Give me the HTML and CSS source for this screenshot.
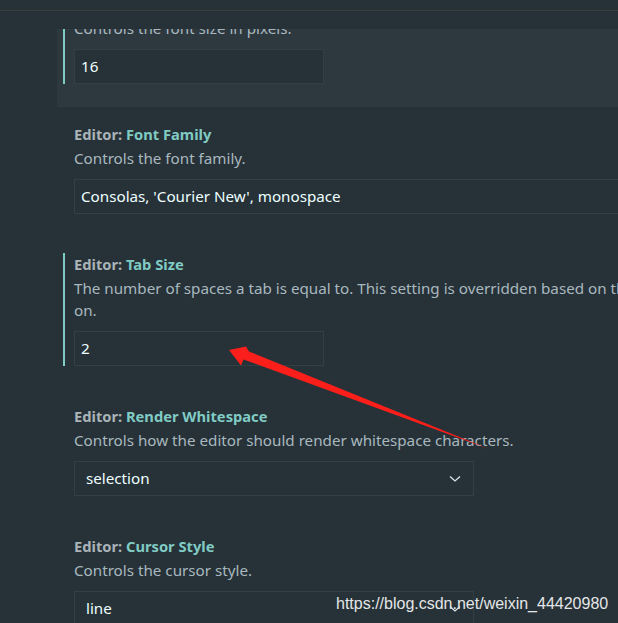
FILE: index.html
```html
<!DOCTYPE html>
<html>
<head>
<meta charset="utf-8">
<link rel="stylesheet" href="styles.css">
</head>
<body>
<div class="page">
  <div class="header"></div>
  <div class="list">
    <div class="scroll">
      <div class="item hovered focused">
        <div class="body">
          <div class="title"><span class="cat">Editor: </span><span class="name">Font Size</span></div>
          <div class="desc">Controls the font size in pixels.</div>
          <div class="field num">16</div>
        </div>
      </div>
      <div class="item">
        <div class="body">
          <div class="title"><span class="cat">Editor: </span><span class="name">Font Family</span></div>
          <div class="desc">Controls the font family.</div>
          <div class="field text">Consolas, 'Courier New', monospace</div>
        </div>
      </div>
      <div class="item focused">
        <div class="body">
          <div class="title"><span class="cat">Editor: </span><span class="name">Tab Size</span></div>
          <div class="desc">The number of spaces a tab is equal to. This setting is overridden based on the file contents when `Editor: Detect Indentation` is<br>on.</div>
          <div class="field num">2</div>
        </div>
      </div>
      <div class="item">
        <div class="body">
          <div class="title"><span class="cat">Editor: </span><span class="name">Render Whitespace</span></div>
          <div class="desc">Controls how the editor should render whitespace characters.</div>
          <div class="field select"><span>selection</span><svg class="chev" width="12" height="8" viewBox="0 0 12 8"><path d="M1 1.5 L6 6 L11 1.5" fill="none" stroke="#d8e6ea" stroke-width="1.3"/></svg></div>
        </div>
      </div>
      <div class="item">
        <div class="body">
          <div class="title"><span class="cat">Editor: </span><span class="name">Cursor Style</span></div>
          <div class="desc">Controls the cursor style.</div>
          <div class="field select"><span>line</span><svg class="chev" width="12" height="8" viewBox="0 0 12 8"><path d="M1 1.5 L6 6 L11 1.5" fill="none" stroke="#d8e6ea" stroke-width="1.3"/></svg></div>
        </div>
      </div>
    </div>
  </div>
  <svg class="arrow" width="618" height="623" viewBox="0 0 618 623">
    <polygon points="229,350 246,346.5 249,351.5 489,449 243.5,359.5 241,365.5" fill="#fa1f1a"/>
  </svg>
  <div class="watermark">https://blog.csdn.net/weixin_44420980</div>
</div>
</body>
</html>
```

FILE: styles.css
```css
html, body {
  margin: 0;
  padding: 0;
  background: #263238;
  overflow: hidden;
}
.page {
  position: relative;
  width: 618px;
  height: 623px;
  overflow: hidden;
  background: #263238;
  font-family: "Noto Sans", "Open Sans", sans-serif;
  font-size: 15.2px;
}
.header {
  height: 10px;
  border-bottom: 1px solid #3b3d3a;
  margin-bottom: 18px;
}
.list {
  height: 594px;
  overflow: hidden;
}
.scroll {
  margin-top: -53px;
}
.item {
  margin-left: 57px;
  padding: 16px 0 23px 6px;
  white-space: nowrap;
}
.item.hovered {
  background: #2d393f;
  padding-top: 17px;
}
.body {
  border-left: 2px solid transparent;
  padding-left: 9px;
}
.item.focused .body {
  border-left-color: #80cbc4;
}
.title {
  height: 22px;
  line-height: 22px;
  font-weight: 700;
  font-size: 14.7px;
}
.cat {
  color: #aab4b8;
}
.name {
  color: #80cbc4;
}
.desc {
  margin-top: 2px;
  line-height: 22px;
  color: #a9b8bf;
}
.field {
  margin-top: 10px;
  height: 35px;
  box-sizing: border-box;
  border: 1px solid #343f45;
  background: #263238;
  color: #eeffff;
  line-height: 33px;
  padding: 0 6px;
}
.field.num {
  width: 250px;
}
.field.text {
  width: 700px;
}
.field.select {
  width: 400px;
  padding: 0 11px;
  display: flex;
  align-items: center;
  justify-content: space-between;
}
.chev {
  display: block;
  margin-right: 1px;
}
.arrow {
  position: absolute;
  left: 0;
  top: 0;
}
.watermark {
  position: absolute;
  left: 336px;
  top: 594px;
  font-family: "Liberation Sans", Arial, sans-serif;
  font-size: 16px;
  line-height: 20px;
  color: #e4e6e7;
  white-space: nowrap;
}
```
